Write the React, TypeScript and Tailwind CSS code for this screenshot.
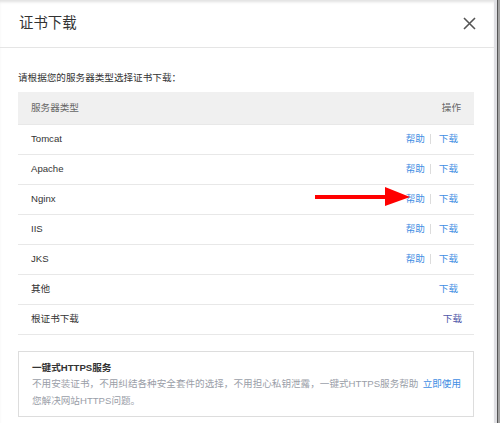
import React from "react";

const rows = [
  { name: "Tomcat", help: true },
  { name: "Apache", help: true },
  { name: "Nginx", help: true },
  { name: "IIS", help: true },
  { name: "JKS", help: true },
  { name: "其他", help: false },
];

function CloseIcon() {
  return (
    <svg width="13" height="13" viewBox="0 0 13 13" className="text-[#555]">
      <path d="M1 1L12 12M12 1L1 12" stroke="currentColor" strokeWidth="1.6" fill="none" />
    </svg>
  );
}

export default function App() {
  return (
    <div
      className="relative flex w-[500px] h-[423px] overflow-hidden bg-white"
      style={{ fontFamily: '"Liberation Sans", "Noto Sans CJK SC", sans-serif' }}
    >
      {/* Dialog panel */}
      <div className="w-[494px] bg-white shadow-[inset_0_3px_3px_-1px_rgba(0,0,0,0.12)]">
        {/* Header */}
        <div className="h-[48px] flex items-center justify-between pl-[19px] pr-[18px] border-b border-[#e5e5e5]">
          <h1 className="text-[14.4px] text-[#333] leading-none">证书下载</h1>
          <CloseIcon />
        </div>

        {/* Body */}
        <div className="px-[18px]">
          <p className="pt-[23px] mb-[7px] text-[9.6px] leading-[14px] text-[#333]">
            请根据您的服务器类型选择证书下载：
          </p>

          {/* Table */}
          <div className="w-[456px] text-[9.6px]">
            <div className="h-[33px] flex items-center justify-between bg-[#f0f0f0] border-b border-[#e8e8e8] pl-[13px] pr-[13px] text-[#666]">
              <span>服务器类型</span>
              <span>操作</span>
            </div>
            {rows.map((r) => (
              <div
                key={r.name}
                className="h-[30px] flex items-center justify-between border-b border-[#e8e8e8] pl-[13px] pr-[16px]"
              >
                <span className="text-[#333]">{r.name}</span>
                <span className="flex items-center text-[#3f8ee3]">
                  {r.help && (
                    <>
                      <span>帮助</span>
                      <span className="ml-[5px] mr-[7px] w-px h-[10px] bg-[#dcdcdc]" />
                    </>
                  )}
                  <span className="ml-[1px]">下载</span>
                </span>
              </div>
            ))}
            <div className="h-[30px] flex items-center justify-between border-b border-[#e8e8e8] pl-[13px] pr-[12px]">
              <span className="text-[#333]">根证书下载</span>
              <span className="text-[#4f57a8]">下载</span>
            </div>
          </div>

          {/* HTTPS service box */}
          <div className="mt-[16px] w-[456px] h-[66px] border border-[#dddddd] pt-[9px] pl-[13px] pr-[12px]">
            <div className="text-[9.6px] leading-[14px] font-bold text-[#333]">一键式HTTPS服务</div>
            <div className="flex items-start">
              <p className="w-[390px] text-[9.6px] leading-[17px] text-[#9a9ea8]">
                不用安装证书，不用纠结各种安全套件的选择，不用担心私钥泄露，一键式HTTPS服务帮助您解决网站HTTPS问题。
              </p>
              <a className="ml-[1px] text-[9.6px] leading-[17px] text-[#3f8ee3] whitespace-nowrap">立即使用</a>
            </div>
          </div>
        </div>
      </div>

      {/* Scrollbar strip */}
      <div className="w-[3px] bg-[#dfdfe3]" />
      <div className="w-px bg-[#555]" />
      <div className="w-[2px] bg-[#a3a3a3]" />

      {/* Red annotation arrow */}
      <svg className="absolute left-[314px] top-[186px]" width="98" height="22" viewBox="0 0 98 22">
        <rect x="1" y="9" width="72" height="4" fill="#ff0000" />
        <polygon points="71,1 96,11 71,20" fill="#ff0000" />
      </svg>
    </div>
  );
}
